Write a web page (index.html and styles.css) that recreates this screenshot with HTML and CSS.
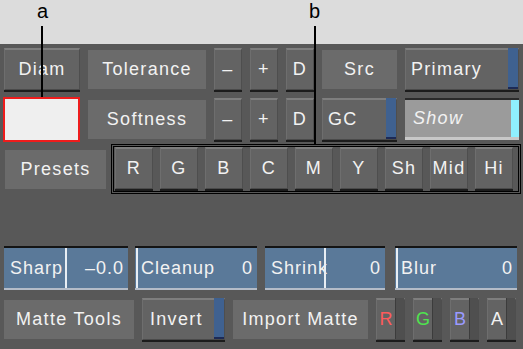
FILE: index.html
```html
<!DOCTYPE html>
<html lang="en">
<head>
    <meta charset="UTF-8">
    <title>Keyer Matte Controls</title>
    <link rel="stylesheet" href="styles.css">
</head>
<body>
    <div class="top"></div>

    <div class="panel">
        <!-- row 1 -->
        <div class="row row-1">
            <div class="btn w-diam">Diam</div>
            <div class="label w-wide">Tolerance</div>
            <div class="btn w-sm">–</div>
            <div class="btn w-sm">+</div>
            <div class="btn w-sm">D</div>
            <div class="label w-src">Src</div>
            <div class="btn w-prim toggle"><span class="txt left">Primary</span><span class="strip"></span></div>
        </div>

        <!-- row 2 -->
        <div class="row row-2">
            <div class="swatch"></div>
            <div class="label w-wide">Softness</div>
            <div class="btn w-sm">–</div>
            <div class="btn w-sm">+</div>
            <div class="btn w-sm">D</div>
            <div class="btn w-src toggle"><span class="txt left">GC</span><span class="strip"></span></div>
            <div class="field"><span class="txt left">Show</span><span class="strip cyan"></span></div>
        </div>

        <!-- row 3 -->
        <div class="row row-3">
            <div class="label w-presets">Presets</div>
            <div class="preset-box">
                <div class="btn w-ch">R</div>
                <div class="btn w-ch">G</div>
                <div class="btn w-ch">B</div>
                <div class="btn w-ch">C</div>
                <div class="btn w-ch">M</div>
                <div class="btn w-ch">Y</div>
                <div class="btn w-ch">Sh</div>
                <div class="btn w-ch">Mid</div>
                <div class="btn w-ch">Hi</div>
            </div>
        </div>

        <!-- row 4: sliders -->
        <div class="row row-4">
            <div class="slider w-sharp"><span>Sharp</span><span>–0.0</span><i class="mark" style="left: 61px"></i></div>
            <div class="slider w-clean"><span>Cleanup</span><span>0</span><i class="mark" style="left: 1px"></i></div>
            <div class="slider w-shrink"><span>Shrink</span><span>0</span><i class="mark" style="left: 59px"></i></div>
            <div class="slider w-blur"><span>Blur</span><span>0</span><i class="mark" style="left: 1px"></i></div>
        </div>

        <!-- row 5 -->
        <div class="row row-5">
            <div class="label w-matte">Matte Tools</div>
            <div class="btn w-invert toggle"><span class="txt">Invert</span><span class="strip"></span></div>
            <div class="label w-import">Import Matte</div>
            <div class="btn chan red"><span class="txt">R</span><span class="side"></span></div>
            <div class="btn chan green"><span class="txt">G</span><span class="side"></span></div>
            <div class="btn chan blue"><span class="txt">B</span><span class="side"></span></div>
            <div class="btn chan"><span class="txt">A</span><span class="side"></span></div>
        </div>
    </div>

    <!-- callouts -->
    <div class="callout callout-a">a</div>
    <div class="callout-line line-a"></div>
    <div class="callout callout-b">b</div>
    <div class="callout-line line-b"></div>
</body>
</html>
```
FILE: styles.css
```css
body {
    margin: 0;
    width: 523px;
    height: 349px;
    overflow: hidden;
    position: relative;
    font-family: "Liberation Sans", Arial, sans-serif;
    background-color: #585858;
}
.top {
    height: 44px;
    background-color: #dcdcdc;
}
.panel {
    padding: 3px 0 0 0;
    color: #f2f2f2;
    font-size: 18px;
    letter-spacing: 1.3px;
}
.row {
    display: flex;
    align-items: center;
    gap: 8px;
}
.row-1 {
    height: 44px;
    padding-left: 4px;
}
.row-2 {
    height: 46px;
    margin-top: 5px;
    padding-left: 3px;
}
.row-3 {
    height: 50px;
    margin-top: 2px;
    padding-left: 5px;
    gap: 5px;
}
.row-4 {
    height: 44px;
    margin-top: 52px;
    padding-left: 4px;
}
.row-5 {
    height: 44px;
    margin-top: 7px;
    padding-left: 4px;
}

/* raised buttons */
.btn {
    box-sizing: border-box;
    height: 42px;
    background-color: #636363;
    border-top: 2px solid #7e7e7e;
    border-left: 1px solid #6e6e6e;
    border-right: 1px solid #4e4e4e;
    border-bottom: 1px solid #4a4a4a;
    box-shadow: 0 2px 0 #1c1c1c;
    display: flex;
    align-items: center;
    justify-content: center;
    position: relative;
}
.label {
    box-sizing: border-box;
    height: 39px;
    background-color: #6b6b6b;
    display: flex;
    align-items: center;
    justify-content: center;
}
.w-diam { width: 76px; }
.w-wide { width: 118px; }
.w-sm { width: 28px; }
.w-src { width: 75px; }
.w-prim { width: 114px; }
.w-presets { width: 101px; }
.w-ch { width: 38px; }
.w-matte { width: 130px; }
.w-invert { width: 83px; }
.w-import { width: 135px; }

.toggle {
    justify-content: space-between;
    padding: 0;
}
.toggle .txt {
    padding-left: 5px;
}
.strip {
    align-self: stretch;
    width: 10px;
    background-color: #3f6190;
    border-bottom: 2px solid #1d2a55;
    margin-top: -2px;
}
.w-invert .txt {
    padding-left: 7px;
}

.swatch {
    box-sizing: border-box;
    width: 77px;
    height: 45px;
    background-color: #efefef;
    border: 2px solid #ee1c1c;
}
.field {
    box-sizing: border-box;
    width: 114px;
    height: 42px;
    background-color: #9b9b9b;
    border-top: 2px solid #2a2a2a;
    border-bottom: 3px solid #c8c8c8;
    display: flex;
    justify-content: space-between;
    font-style: italic;
}
.field .txt {
    padding-left: 8px;
    display: flex;
    align-items: center;
}
.strip.cyan {
    background-color: #8ff0ff;
    border-bottom: none;
    width: 8px;
    margin: 0;
}

.preset-box {
    box-sizing: border-box;
    width: 410px;
    height: 50px;
    border: 1px solid #000;
    box-shadow: inset 0 0 0 1px #585858, inset 0 0 0 2px #000;
    display: flex;
    align-items: center;
    gap: 7px;
    padding: 0 0 0 3px;
}
.preset-box .btn {
    margin-top: -2px;
}

/* sliders */
.slider {
    box-sizing: border-box;
    height: 44px;
    background-color: #5a7999;
    border-top: 2px solid #141414;
    border-bottom: 2px solid #b4bcc8;
    display: flex;
    align-items: center;
    justify-content: space-between;
    padding: 0 4px 0 6px;
    position: relative;
    letter-spacing: 1px;
}
.mark {
    position: absolute;
    top: 0;
    bottom: 0;
    width: 2px;
    background-color: #e8eef4;
}
.w-sharp { width: 124px; }
.w-clean { width: 122px; margin-left: -1px; }
.w-shrink { width: 120px; }
.w-blur { width: 122px; margin-left: 2px; }

/* channel buttons */
.chan {
    width: 29px;
    padding: 0;
    justify-content: flex-start;
}
.chan .txt {
    width: 18px;
    text-align: center;
    letter-spacing: 0;
}
.chan .side {
    align-self: stretch;
    flex: 1;
    background-color: #4f4f4f;
    border-left: 1px solid #3c3c3c;
    margin-top: -2px;
}
.red .txt { color: #ff5b5b; }
.green .txt { color: #4fe34f; }
.blue .txt { color: #9a9aff; }

/* callouts */
.callout {
    position: absolute;
    top: 0;
    font-size: 20px;
    color: #000;
}
.callout-a { left: 37px; }
.callout-b { left: 309px; }
.callout-line {
    position: absolute;
    top: 26px;
    width: 2px;
    background-color: #000;
}
.line-a { left: 41px; height: 71px; }
.line-b { left: 314px; height: 119px; }
```
